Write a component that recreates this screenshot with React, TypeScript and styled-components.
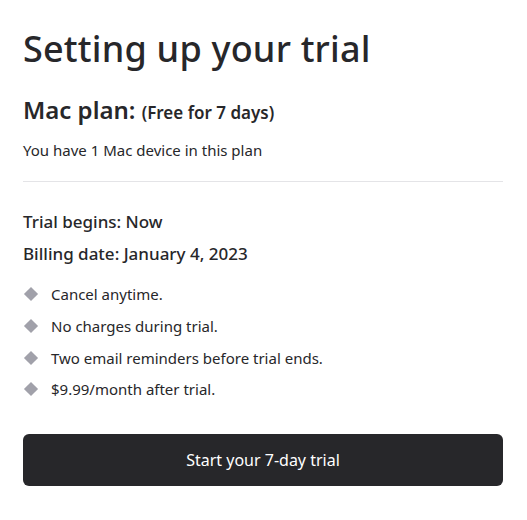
import React from "react";
import styled, { createGlobalStyle } from "styled-components";

const Global = createGlobalStyle`
  html, body { margin: 0; padding: 0; background: #fff; }
  body { font-family: "Noto Sans", "Open Sans", sans-serif; color: #27272a; }
`;

const Page = styled.div`
  width: 480px;
  padding: 25px 23px;
`;

const Title = styled.h1`
  margin: 0;
  font-size: 36px;
  font-weight: 500;
  line-height: 48px;
  letter-spacing: 0.2px;
`;

const PlanHeading = styled.h2`
  margin: 21px 0 0;
  font-size: 24px;
  font-weight: 600;
  line-height: 32px;
`;

const PlanNote = styled.span`
  font-size: 17px;
  font-weight: 600;
`;

const Muted = styled.p`
  margin: 11px 0 0;
  font-size: 15px;
  line-height: 20px;
`;

const Divider = styled.hr`
  margin: 21px 0 0;
  border: 0;
  border-top: 1px solid #e4e4e7;
`;

const Facts = styled.div`
  margin-top: 27.5px;
  display: flex;
  flex-direction: column;
  gap: 8px;
`;

const Fact = styled.div`
  font-size: 17px;
  font-weight: 500;
  line-height: 24px;
`;

const List = styled.ul`
  list-style: none;
  margin: 18.7px 0 0;
  padding: 0;
  display: flex;
  flex-direction: column;
  gap: 11.7px;
`;

const Item = styled.li`
  display: flex;
  align-items: center;
  gap: 15px;
  font-size: 15px;
  line-height: 20px;
`;

const Diamond = styled.span`
  width: 10px;
  height: 10px;
  margin-left: 3px;
  background: #a1a1aa;
  transform: rotate(45deg);
  flex: none;
`;

const Button = styled.button`
  display: block;
  margin-top: 35px;
  width: 100%;
  height: 52px;
  border: 0;
  border-radius: 6px;
  background: #27272a;
  color: #fff;
  font-family: inherit;
  font-size: 16px;
  font-weight: 400;
`;

const items = [
  "Cancel anytime.",
  "No charges during trial.",
  "Two email reminders before trial ends.",
  "$9.99/month after trial.",
];

export default function App() {
  return (
    <>
      <Global />
      <Page>
        <Title>Setting up your trial</Title>
        <PlanHeading>
          Mac plan: <PlanNote>(Free for 7 days)</PlanNote>
        </PlanHeading>
        <Muted>You have 1 Mac device in this plan</Muted>
        <Divider />
        <Facts>
          <Fact>Trial begins: Now</Fact>
          <Fact>Billing date: January 4, 2023</Fact>
        </Facts>
        <List>
          {items.map((t) => (
            <Item key={t}>
              <Diamond />
              {t}
            </Item>
          ))}
        </List>
        <Button>Start your 7-day trial</Button>
      </Page>
    </>
  );
}
